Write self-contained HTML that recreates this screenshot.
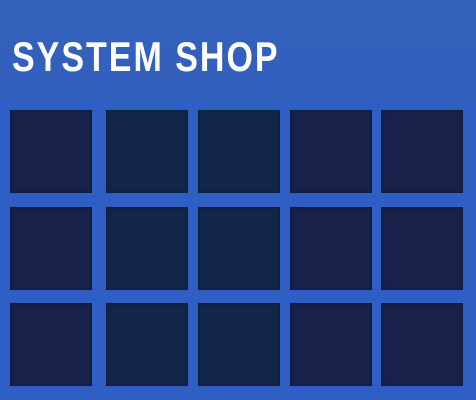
<!DOCTYPE html>
<html><head><style>
html,body{margin:0;padding:0;}
body{width:476px;height:400px;overflow:hidden;position:relative;background:#2f5ec4;font-family:"Liberation Sans",sans-serif;}
.hdr{position:absolute;left:0;top:0;width:476px;height:102px;background:linear-gradient(#3461ba,#3160bd);}
.t{position:absolute;left:12px;top:33px;color:#fff;font-size:34px;font-weight:bold;letter-spacing:2px;transform:scaleY(1.22);transform-origin:top left;white-space:nowrap;line-height:40px;}
.sq{position:absolute;width:82px;height:83px;background:#17214a;box-shadow:inset 0 0 3px rgba(0,0,0,.4);}
.b{background:#132548;}
</style></head><body>
<div class="hdr"></div>
<div class="t">SYSTEM SHOP</div>
<div class="sq" style="left:10px;top:110px"></div>
<div class="sq b" style="left:106px;top:110px"></div>
<div class="sq b" style="left:198px;top:110px"></div>
<div class="sq" style="left:290px;top:110px"></div>
<div class="sq" style="left:381px;top:110px"></div>
<div class="sq" style="left:10px;top:207px"></div>
<div class="sq b" style="left:106px;top:207px"></div>
<div class="sq b" style="left:198px;top:207px"></div>
<div class="sq" style="left:290px;top:207px"></div>
<div class="sq" style="left:381px;top:207px"></div>
<div class="sq" style="left:10px;top:303px"></div>
<div class="sq b" style="left:106px;top:303px"></div>
<div class="sq b" style="left:198px;top:303px"></div>
<div class="sq" style="left:290px;top:303px"></div>
<div class="sq" style="left:381px;top:303px"></div>
</body></html>
